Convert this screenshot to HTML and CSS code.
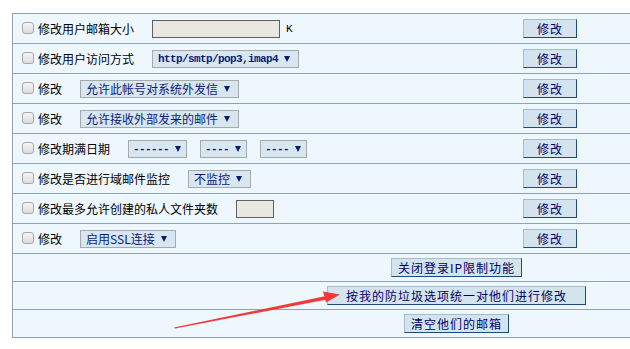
FILE: index.html
```html
<!DOCTYPE html>
<html lang="zh-CN">
  <head>
    <meta charset="UTF-8" />
    <title>批量修改用户</title>
    <link rel="stylesheet" href="styles.css">
  </head>
  <body>
    <table class="tabel">
      <tr>
        <td class="venstre">
          <div class="rad">
            <input type="checkbox" class="kryds" />
            <span class="tekst">修改用户邮箱大小</span>
            <span class="felt bred"></span>
            <span class="enhed">K</span>
          </div>
        </td>
        <td class="hojre"><button class="knap">修改</button></td>
      </tr>
      <tr>
        <td class="venstre">
          <div class="rad">
            <input type="checkbox" class="kryds" />
            <span class="tekst">修改用户访问方式</span>
            <span class="valg mono">http/smtp/pop3,imap4<i></i></span>
          </div>
        </td>
        <td class="hojre"><button class="knap">修改</button></td>
      </tr>
      <tr>
        <td class="venstre">
          <div class="rad">
            <input type="checkbox" class="kryds" />
            <span class="tekst">修改</span>
            <span class="valg">允许此帐号对系统外发信<i></i></span>
          </div>
        </td>
        <td class="hojre"><button class="knap">修改</button></td>
      </tr>
      <tr>
        <td class="venstre">
          <div class="rad">
            <input type="checkbox" class="kryds" />
            <span class="tekst">修改</span>
            <span class="valg">允许接收外部发来的邮件<i></i></span>
          </div>
        </td>
        <td class="hojre"><button class="knap">修改</button></td>
      </tr>
      <tr>
        <td class="venstre">
          <div class="rad">
            <input type="checkbox" class="kryds" />
            <span class="tekst">修改期满日期</span>
            <span class="valg mono dato aar">------<i></i></span>
            <span class="valg mono dato">----<i></i></span>
            <span class="valg mono dato">----<i></i></span>
          </div>
        </td>
        <td class="hojre"><button class="knap">修改</button></td>
      </tr>
      <tr>
        <td class="venstre">
          <div class="rad">
            <input type="checkbox" class="kryds" />
            <span class="tekst">修改是否进行域邮件监控</span>
            <span class="valg">不监控<i></i></span>
          </div>
        </td>
        <td class="hojre"><button class="knap">修改</button></td>
      </tr>
      <tr>
        <td class="venstre">
          <div class="rad">
            <input type="checkbox" class="kryds" />
            <span class="tekst">修改最多允许创建的私人文件夹数</span>
            <span class="felt smal"></span>
          </div>
        </td>
        <td class="hojre"><button class="knap">修改</button></td>
      </tr>
      <tr>
        <td class="venstre">
          <div class="rad">
            <input type="checkbox" class="kryds" />
            <span class="tekst">修改</span>
            <span class="valg">启用SSL连接<i></i></span>
          </div>
        </td>
        <td class="hojre"><button class="knap">修改</button></td>
      </tr>
      <tr class="lav">
        <td colspan="2" class="midt"><button class="knap">关闭登录IP限制功能</button></td>
      </tr>
      <tr class="lav">
        <td colspan="2" class="midt"><button class="knap lang">按我的防垃圾选项统一对他们进行修改</button></td>
      </tr>
      <tr class="lav">
        <td colspan="2" class="midt"><button class="knap">清空他们的邮箱</button></td>
      </tr>
    </table>

    <!-- rød pil -->
    <svg class="pil" width="630" height="349" viewBox="0 0 630 349">
      <polygon points="174,327.5 326,296 327,299.5 175,328.5" fill="#f03a3a" />
      <polygon points="340,294.5 323,291.5 326,302.5" fill="#f03a3a" />
    </svg>
  </body>
</html>
```

FILE: styles.css
```css
/* ---------GRUNDLAG------------*/
html,
body {
  overflow: hidden;
}

body {
  margin: 0;
  padding: 13px 0 0 12px;
  background-color: #ffffff;
  font-family: "Noto Sans CJK SC", "Noto Sans", sans-serif;
  font-size: 12px;
  color: #000000;
}

/* ---------TABEL------------*/
.tabel {
  width: 888px;
  border-collapse: collapse;
  table-layout: fixed;
  background-color: #eef6fe;
  border-top: 1px solid #8ea2b2;
  border-left: 1px solid #8ea2b2;
}

.tabel tr {
  height: 30px;
  border-bottom: 1px solid #8ea2b2;
}

.tabel tr.lav {
  height: 28px;
}

.tabel td {
  padding: 0;
  vertical-align: middle;
}

.venstre {
  width: 500px;
}

.rad {
  display: flex;
  align-items: center;
  padding-left: 8px;
  white-space: nowrap;
}

.hojre {
  padding-left: 10px !important;
}

.midt {
  text-align: center;
}

/* ---------FELTER------------*/
.kryds {
  appearance: none;
  width: 12px;
  height: 12px;
  margin: 0 4px 1px 1px;
  border: 1px solid #a8a8a8;
  border-radius: 3px;
  background: linear-gradient(#f4f4f4, #dcdcdc);
}

.tekst {
  line-height: 16px;
  margin-right: 18px;
}

.felt {
  display: inline-block;
  height: 16px;
  background-color: #e8e8e0;
  border: 1px solid #606060;
}

.bred {
  width: 126px;
}

.smal {
  width: 36px;
}

.enhed {
  margin-left: 6px;
  font-family: "Liberation Mono", monospace;
  font-size: 11px;
}

.valg {
  display: inline-flex;
  align-items: center;
  height: 16px;
  padding: 0 8px 0 5px;
  background-color: #d8e6f0;
  border: 1px solid #a4aab0;
  color: #0a1a78;
  line-height: 16px;
}

/* lille trekant i stedet for pil-ikon */
.valg i {
  width: 0;
  height: 0;
  margin-left: 6px;
  border-left: 3px solid transparent;
  border-right: 3px solid transparent;
  border-top: 6px solid #0a1a78;
}

.mono {
  font-family: "Liberation Mono", monospace;
  font-size: 11px;
  font-weight: bold;
  letter-spacing: -0.6px;
}

.dato {
  box-sizing: content-box;
  width: 35px;
  margin-right: 13px;
  padding: 0 6px 0 4px;
  justify-content: space-between;
}

.dato.aar {
  width: 47px;
}

/* ---------KNAPPER------------*/
.knap {
  min-width: 54px;
  height: 19px;
  padding: 0 6px;
  background-color: #d4e4ee;
  border: 1px solid;
  border-color: #a6bccc #1c4a7c #1c4a7c #a6bccc;
  color: #000066;
  font-family: "Noto Sans CJK SC", "Noto Sans", sans-serif;
  font-size: 12px;
  line-height: 17px;
  letter-spacing: 1px;
}

.knap.lang {
  padding: 0 18px;
}

/* ---------PIL------------*/
.pil {
  position: absolute;
  top: 0;
  left: 0;
  pointer-events: none;
}
```
